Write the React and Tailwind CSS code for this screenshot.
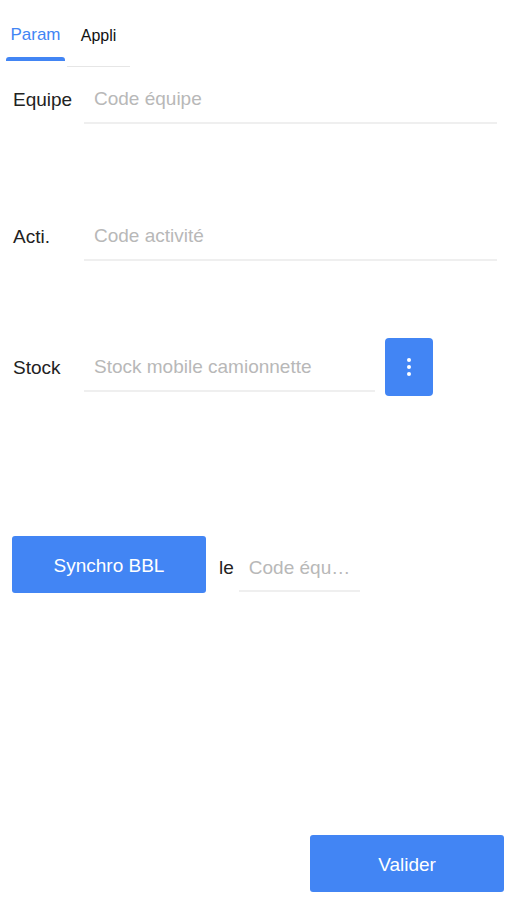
import React, { useState } from 'react';

const BLUE = 'bg-[#4285f4]';

const Field = ({ placeholder, className = '' }) => (
  <div className={`h-[50px] border-b-2 border-[#efefef] flex items-center ${className}`}>
    <input
      type="text"
      placeholder={placeholder}
      className="w-full bg-transparent pl-[10px] pt-[3px] text-[19px] text-[#222] placeholder:text-[#b8b8b8] outline-none"
    />
  </div>
);

const Row = ({ label, children, className = '' }) => (
  <div className={`flex items-center pl-[13px] pr-[10px] ${className}`}>
    <span className="w-[71px] shrink-0 pt-[3px] text-[19px] text-[#222]">{label}</span>
    {children}
  </div>
);

const App = () => {
  const [tab, setTab] = useState('param');

  return (
    <div className="min-h-[900px] bg-white font-['Liberation_Sans',Arial,sans-serif]">
      {/* tabs */}
      <div className="flex h-[67px] items-start pl-[6px]">
        <button
          onClick={() => setTab('param')}
          className="relative flex h-[61px] w-[59px] items-start justify-center pt-[22px] text-[17px] text-[#4285f4]"
        >
          Param
          {tab === 'param' && (
            <span className="absolute bottom-0 left-0 h-[4px] w-full rounded-t-[3px] bg-[#4285f4]" />
          )}
        </button>
        <button
          onClick={() => setTab('appli')}
          className="ml-[2px] flex h-[67px] w-[63px] items-start justify-center border-b border-[#e6e6e6] pt-[24px] text-[16px] text-[#111]"
        >
          Appli
        </button>
      </div>

      <Row label="Equipe" className="mt-[7px]">
        <Field placeholder="Code équipe" className="flex-1" />
      </Row>

      <Row label="Acti." className="mt-[87px]">
        <Field placeholder="Code activité" className="flex-1" />
      </Row>

      <Row label="Stock" className="mt-[77px]">
        <Field placeholder="Stock mobile camionnette" className="w-[291px]" />
        <button className={`ml-[10px] flex h-[58px] w-[48px] flex-col items-center justify-center gap-[3px] rounded-[4px] ${BLUE}`}>
          <span className="h-[4px] w-[4px] rounded-full bg-white" />
          <span className="h-[4px] w-[4px] rounded-full bg-white" />
          <span className="h-[4px] w-[4px] rounded-full bg-white" />
        </button>
      </Row>

      <div className="mt-[140px] flex items-center pl-[12px]">
        <button className={`h-[57px] w-[194px] rounded-[3px] pt-[3px] text-[19px] text-white ${BLUE}`}>
          Synchro BBL
        </button>
        <span className="ml-[13px] pt-[8px] text-[19px] text-[#222]">le</span>
        <div className="ml-[5px] mt-[4px] flex h-[50px] w-[121px] items-center border-b-2 border-[#efefef]">
          <input
            type="text"
            placeholder="Code équ…"
            className="w-full bg-transparent pl-[10px] pt-[6px] text-[19px] placeholder:text-[#b8b8b8] outline-none"
          />
        </div>
      </div>

      <div className="mt-[242px] flex justify-end pr-[3px]">
        <button className={`h-[57px] w-[194px] rounded-[3px] pt-[3px] text-[19px] text-white ${BLUE}`}>
          Valider
        </button>
      </div>
    </div>
  );
};

export default App;
